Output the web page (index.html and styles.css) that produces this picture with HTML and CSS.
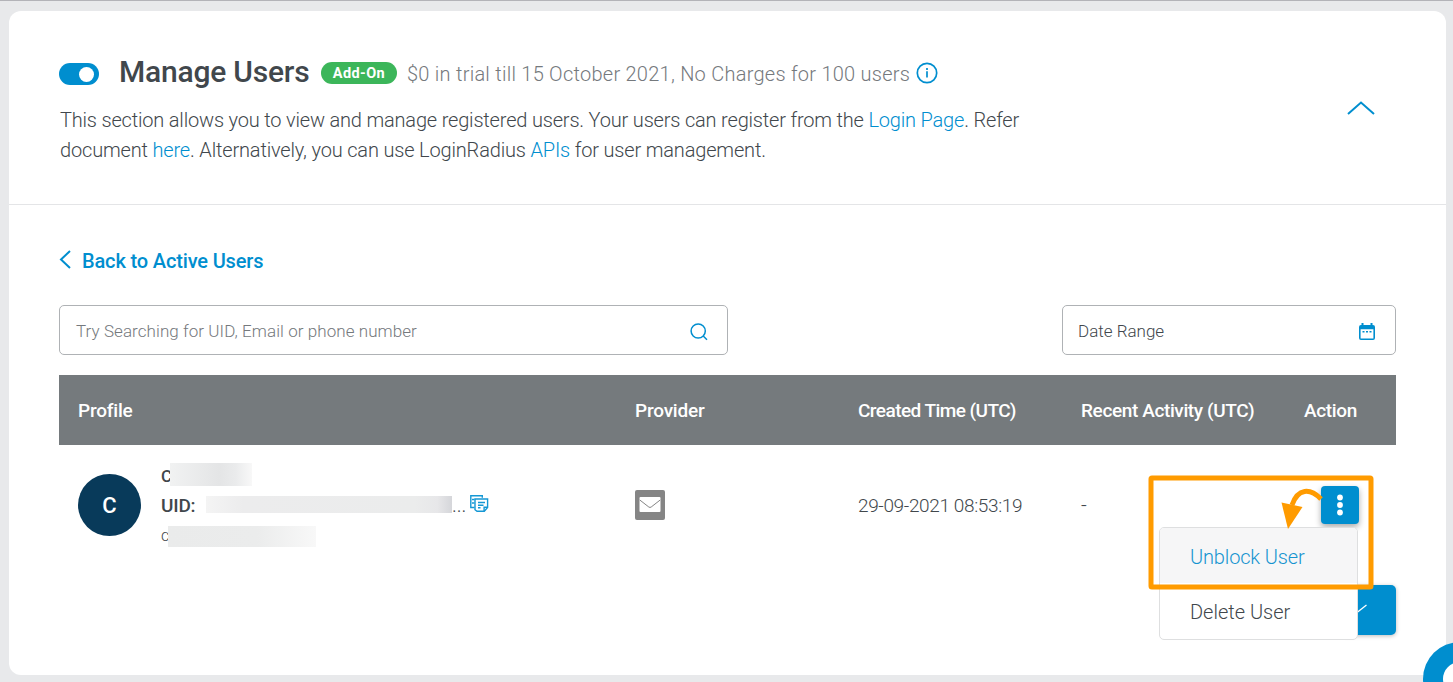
FILE: index.html
```html
<!DOCTYPE html>
<html lang="en">
<head>
<meta charset="utf-8">
<title>Manage Users</title>
<link rel="stylesheet" href="styles.css">
</head>
<body>
<main class="card">
  <header class="card-head">
    <div class="intro">
      <div class="title-row">
        <span class="toggle"><span class="knob"></span></span>
        <h1 class="title">Manage Users</h1>
        <span class="badge"><span class="badge-text">Add-On</span></span>
        <span class="trial">$0 in trial till 15 October 2021, No Charges for 100 users</span>
        <svg class="info" width="22" height="22" viewBox="0 0 22 22" fill="none" stroke="#008ecf"><circle cx="11" cy="11" r="9.7" stroke-width="1.7"/><path d="M11 9.3v6.2M11 6v2" stroke-width="1.7"/></svg>
      </div>
      <p class="desc"><span class="line1">This section allows you to view and manage registered users. Your users can register from the <a>Login Page</a>. Refer</span><br><span class="line2">document <a>here</a>. Alternatively, you can use LoginRadius <a>APIs</a> for user management.</span></p>
    </div>
    <svg class="collapse" width="28" height="14" viewBox="0 0 28 14" fill="none" stroke="#008ecf" stroke-width="2"><path d="M1 13 14 1.5 27 13"/></svg>
  </header>
  <section class="content">
    <a class="back">
      <svg width="12" height="19" viewBox="0 0 12 19" fill="none" stroke="#008ecf" stroke-width="2"><path d="M11 1 2 9.5 11 18"/></svg>
      <span class="back-text">Back to Active Users</span>
    </a>
    <div class="filters">
      <div class="field search">
        <span class="placeholder">Try Searching for UID, Email or phone number</span>
        <svg width="18" height="18" viewBox="0 0 18 18" fill="none" stroke="#008ecf" stroke-width="1.5"><circle cx="8.2" cy="8" r="7.1"/><path d="m13.2 13 3.8 3.8"/></svg>
      </div>
      <div class="field date">
        <span class="date-text">Date Range</span>
        <svg width="16" height="18" viewBox="0 0 16 18"><path fill="#008ecf" fill-rule="evenodd" d="M2.5 0h2v2h7V0h2v2H14a2 2 0 0 1 2 2v11a2 2 0 0 1-2 2H2a2 2 0 0 1-2-2V4a2 2 0 0 1 2-2h.5zM1.6 6.2v9.2h12.8V6.2z"/><path fill="#008ecf" d="M3.5 8h2v1.5h-2zM7 8h2v1.5H7zM10.500 8h2v1.500h-2z"/></svg>
      </div>
    </div>
    <div class="row thead">
      <span><b class="h1">Profile</b></span><span><b class="h2">Provider</b></span><span><b class="h3">Created Time (UTC)</b></span><span><b class="h4">Recent Activity (UTC)</b></span><span><b class="h5">Action</b></span>
    </div>
    <div class="row user">
      <div class="profile">
        <span class="avatar">C</span>
        <div class="details">
          <div class="detail name"><b>C</b><i class="mask mask-name"></i></div>
          <div class="detail uid"><b>UID:</b><i class="mask mask-uid"></i><span class="dots">...</span>
            <svg width="19" height="18" viewBox="0 0 19 18" fill="none" stroke="#1497d4" stroke-width="1.4"><path d="M4.500 12.500H.8V.8h11.500v2"/><path d="M2 4.500h2.500M2 8h2.500"/><path d="M5 4h12.600v8.500l-3.300 3.700H7l-2-1.500z"/><path d="M8 7.500h7M8 10.200h5.500M8 12.800h2.500M17.600 12.300h-3.500v3.700"/></svg>
          </div>
          <div class="detail mail"><span>c</span><i class="mask mask-mail"></i></div>
        </div>
      </div>
      <div><svg class="provider" width="30" height="30" viewBox="0 0 30 30"><rect width="30" height="30" rx="2" fill="#858585"/><rect x="4.500" y="7" width="21" height="15" rx="1" fill="#fff"/><path d="m4.800 10 9 7q1.200.9 2.400 0l9-7" fill="none" stroke="#858585"/></svg></div>
      <div><span class="created">29-09-2021 08:53:19</span></div>
      <div>-</div>
      <div class="action">
        <button class="more" aria-label="Actions"><svg width="8" height="22" viewBox="0 0 8 22" fill="#fff"><circle cx="4" cy="3.500" r="2.900"/><circle cx="4" cy="11" r="2.900"/><circle cx="4" cy="18.500" r="2.900"/></svg></button>
      </div>
    </div>
  </section>
</main>
<div class="pager"><svg width="14" height="12" viewBox="0 0 14 12" fill="none" stroke="#fff" stroke-width="1.300"><path d="m3 8.500 9.500-7.500"/></svg></div>
<div class="menu">
  <div class="item active"><span class="unblock">Unblock User</span></div>
  <div class="item"><span class="delete">Delete User</span></div>
</div>
<svg class="callout" width="226" height="116" viewBox="0 0 226 116" fill="none" stroke="#ff9b00"><rect x="3" y="4" width="220" height="109" rx="1" stroke-width="5"/><path d="M144 31C150 14 162 14 173 25" stroke-width="5"/><path d="m133.500 28.500 21 4.500-14.500 22z" fill="#ff9b00" stroke="none"/></svg>
<svg class="chat" width="30" height="40" viewBox="0 0 30 40"><circle cx="37" cy="37" r="37" fill="#008ecf"/><circle cx="37" cy="37" r="17" fill="#fff"/></svg>
</body>
</html>
```
FILE: styles.css
```css
* { box-sizing: border-box; }
body {
  margin: 0; height: 682px; padding: 10px 7px 7px 9px; overflow: hidden; position: relative;
  border-top: 1px solid #b3b3b8; background: #e8e9eb; color: #41474c;
  font: 300 20px/30px Roboto, sans-serif;
}
a { color: #008ecf; }
span, b { white-space: nowrap; }
.card { height: 664px; background: #fff; border-radius: 12px; }
.card-head { height: 194px; padding: 42px 71px 0 50px; border-bottom: 1px solid #e4e5e7; display: flex; justify-content: space-between; }
.title-row { display: flex; align-items: center; height: 40px; }
.toggle { width: 40px; height: 22px; margin: 2px 21px 0 0; border-radius: 11px; background: #008ecf; display: flex; justify-content: flex-end; padding: 4px 5px; }
.knob { width: 15px; height: 15px; border-radius: 50%; background: #fff; }
.title { margin: 0 12px 2px -1px; width: 190px; font-size: 30px; line-height: 38px; font-weight: 500; letter-spacing: -.22px; white-space: nowrap; }
.badge { width: 76px; height: 22px; border-radius: 11px; background: #3cb65a; color: #fff; font-size: 14.5px; line-height: 22px; font-weight: 700; text-align: center; letter-spacing: .4px; }
.badge-text { display: block; padding-top: 1px; }
.trial { width: 503px; margin: 2px 6px 0 10px; color: #75797d; letter-spacing: .255px; }
.desc { margin: 12px 0 0; padding-left: 1px; }
.line1 { letter-spacing: -.185px; }
.line2 { letter-spacing: -.17px; }
.collapse { margin-top: 48px; }
.content { padding: 40px 50px 0; }
.back { display: flex; align-items: center; gap: 11px; height: 30px; font-weight: 500; letter-spacing: -.15px; }
.back svg { margin-bottom: 2px; }
.back-text { padding-top: 2px; }
.filters { display: flex; justify-content: space-between; margin-top: 30px; }
.field { height: 50px; border: 1px solid #afb2b5; border-radius: 5px; display: flex; align-items: center; justify-content: space-between; padding: 2px 19px 0 16px; font-size: 17px; }
.field svg { margin-top: 2px; }
.search { width: 669px; color: #75797d; letter-spacing: .07px; }
.date { width: 334px; padding-left: 15px; }
.date svg { margin-right: 1px; }
.row { display: grid; grid-template-columns: 557px 223px 223px 223px 1fr; padding-left: 19px; align-items: center; }
.thead { height: 70px; margin-top: 20px; padding-top: 1px; background: #757a7d; color: #fff; font-size: 19px; }
.thead b { font-weight: 500; letter-spacing: -.2px; }
.thead .h3 { letter-spacing: -.55px; }
.thead .h4 { letter-spacing: -.38px; }
.thead .h5 { letter-spacing: -.35px; }
.user { height: 120px; }
.profile { display: flex; align-items: center; gap: 20px; }
.avatar { width: 63px; height: 62px; border-radius: 50%; background: #083a5a; color: #fff; font-size: 22px; line-height: 64px; font-weight: 500; text-align: center; }
.detail { display: flex; align-items: center; height: 30.500px; }
.detail b { font-weight: 500; font-size: 19px; }
.name b { width: 9px; font-size: 17px; padding-top: 2px; }
.mask { display: block; position: relative; }
.mask-name { width: 82px; height: 23px; background: linear-gradient(90deg, #f1f2f2, #e4e5e6 60%, #eaebec 80%, #f8f8f8); }
.uid b { width: 45px; padding-top: 1px; letter-spacing: -.2px; }
.mask-uid { width: 246px; height: 17px; margin-top: -2px; background: linear-gradient(90deg, #f4f4f4, #ececed 15%, #ebecec 85%, #e7e7e9 94%, #d5d6da); }
.uid svg { margin-top: -2px; }
.dots { margin: 0 4px 0 0; width: 14px; }
.mail span { width: 7px; font-size: 16px; }
.mask-mail { width: 148px; height: 21px; margin-top: 1px; background: linear-gradient(90deg, #eaebeb, #ebecec 60%, #f8f8f8); }
.provider { display: block; }
.created { font-size: 19px; letter-spacing: -.36px; }
.action { padding-left: 17px; }
.more { width: 38px; height: 38px; display: flex; align-items: center; justify-content: center; padding: 0; border: 0; border-radius: 4px; background: #008ecf; box-shadow: 0 3px 6px #0005; }
.pager { position: absolute; left: 1340px; top: 584px; width: 56px; height: 50px; padding: 19px 0 0 14px; border-radius: 5px; background: #008ecf; box-shadow: 0 1px 4px #0004; line-height: 0; }
.menu { position: absolute; left: 1158.500px; top: 526px; width: 199px; height: 113px; border: 1px solid #dedfe0; border-radius: 5px; background: #fff; overflow: hidden; }
.item { height: 55px; padding: 14px 30.500px; }
.active { height: 55px; background: #f6f6f7; color: #1594d0; letter-spacing: -.15px; }
.callout { position: absolute; left: 1148px; top: 473px; }
.chat { position: absolute; left: 1423px; top: 641px; }
```
